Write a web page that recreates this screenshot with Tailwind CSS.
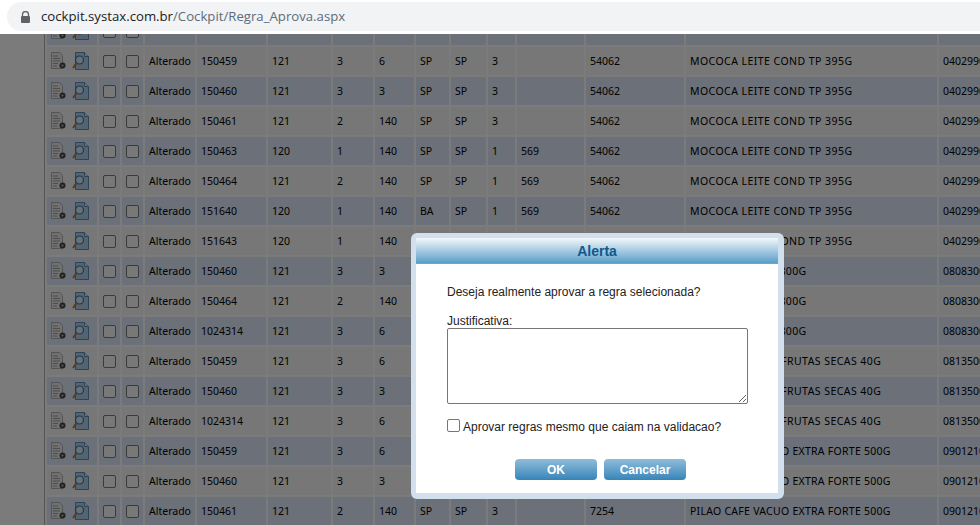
<!DOCTYPE html>
<html lang="en">
  <head>
    <meta charset="UTF-8" />
    <title>Regra Aprova</title>
    <script src="https://cdn.jsdelivr.net/npm/@tailwindcss/browser@4"></script>
  </head>
  <body class="h-[525px] w-[980px] overflow-hidden bg-white font-['Liberation_Sans',sans-serif]">
    <!-- browser bar -->
    <div class="h-[34px] overflow-hidden bg-white pl-[7px] pt-[2px]">
      <div class="flex h-[29px] w-[1100px] items-center rounded-full bg-[#f1f3f4] pl-[13px]">
        <svg width="11" height="12" viewBox="0 0 11 12" class="mr-[10px]">
          <path d="M2.5 5V3.6a3 3 0 0 1 6 0V5" fill="none" stroke="#5f6368" stroke-width="1.3" />
          <rect x="1" y="5" width="9" height="7" rx="1" fill="#5f6368" />
        </svg>
        <span class="pt-px font-['Open_Sans',sans-serif] text-[13.2px] text-[#5f6b7a]"><span class="text-[#202124]">cockpit.systax.com.br</span>/Cockpit/Regra_Aprova.aspx</span>
      </div>
    </div>

    <div class="relative h-[491px] overflow-hidden bg-[#f7f7f7]">
      <!-- grid, scrolled so the first row is cut off -->
      <div class="ml-[44px] w-[1000px] border-l border-[#aaa] -mt-[19px]">
        <table class="table-fixed border-separate border-spacing-[2px] font-['Noto_Sans',sans-serif] text-[10.5px] text-black">
          <colgroup>
            <col class="w-[50px]" /><col class="w-[21px]" /><col class="w-[21px]" /><col class="w-[49px]" />
            <col class="w-[69px]" /><col class="w-[63px]" /><col class="w-[40px]" /><col class="w-[39px]" />
            <col class="w-[33px]" /><col class="w-[35px]" /><col class="w-[27px]" /><col class="w-[67px]" />
            <col class="w-[98px]" /><col class="w-[251px]" /><col class="w-[100px]" />
          </colgroup>
          <tbody id="rows"></tbody>
        </table>
      </div>

      <!-- overlay -->
      <div class="absolute inset-0 bg-black/50"></div>

      <!-- dialog -->
      <div class="absolute left-[411px] top-[199px] h-[266px] w-[373px] rounded-[6px] bg-[#d1e0ec] pt-[5px] pr-[6px] pb-[6px] pl-[5px]">
        <div class="h-full bg-white">
          <div class="h-[26px] border-b border-[#999] bg-gradient-to-b from-[#f2f7fa] to-[#5a9fc9] text-center text-[14px] leading-[26px] font-bold text-[#0f5a8c]">Alerta</div>
          <div class="px-[31px] pt-[21px] text-[12px] text-[#222]">
            <p class="leading-[14px]">Deseja realmente aprovar a regra selecionada?</p>
            <label class="mt-[16px] block leading-[13px]">Justificativa:</label>
            <textarea class="block h-[76px] w-[301px] rounded-[2px] border border-[#767676] bg-white"></textarea>
            <div class="mt-[15px] flex items-start">
              <span class="h-[13px] w-[13px] rounded-[2px] border border-[#767676] bg-white"></span>
              <span class="ml-[3px] leading-[16px]">Aprovar regras mesmo que caiam na validacao?</span>
            </div>
            <div class="mt-[24px] flex justify-center gap-[7px] pl-[7px]">
              <button class="h-[21px] w-[82px] rounded-[4px] bg-gradient-to-b from-[#8fbcdb] to-[#3485b8] text-[12px] font-bold text-white">OK</button>
              <button class="h-[21px] w-[82px] rounded-[4px] bg-gradient-to-b from-[#8fbcdb] to-[#3485b8] text-[12px] font-bold text-white">Cancelar</button>
            </div>
          </div>
        </div>
      </div>
    </div>

    <script>
      // product name, code, letter spacing of the name
      const MOC = ["MOCOCA LEITE COND TP 395G", "0402990", "tracking-[0.45px]"];
      const LEI = ["LEITE EM PO INT 800G", "0808300", "tracking-[0.3px]"];
      const FRU = ["BARRA CEREAL E FRUTAS SECAS 40G", "0813500", "tracking-[0.45px]"];
      const PIL = ["PILAO CAFE VACUO EXTRA FORTE 500G", "0901210", "tracking-[0.27px]"];

      const data = [
        ["", "", "", "", "", "", "", "", "", "", "", ""],
        ["150459", "121", "3", "6", "SP", "SP", "3", "", "54062", ...MOC],
        ["150460", "121", "3", "3", "SP", "SP", "3", "", "54062", ...MOC],
        ["150461", "121", "2", "140", "SP", "SP", "3", "", "54062", ...MOC],
        ["150463", "120", "1", "140", "SP", "SP", "1", "569", "54062", ...MOC],
        ["150464", "121", "2", "140", "SP", "SP", "1", "569", "54062", ...MOC],
        ["151640", "120", "1", "140", "BA", "SP", "1", "569", "54062", ...MOC],
        ["151643", "120", "1", "140", "BA", "SP", "1", "569", "54062", ...MOC],
        ["150460", "121", "3", "3", "SP", "SP", "3", "", "7254", ...LEI],
        ["150464", "121", "2", "140", "SP", "SP", "3", "", "7254", ...LEI],
        ["1024314", "121", "3", "6", "SP", "SP", "3", "", "7254", ...LEI],
        ["150459", "121", "3", "6", "SP", "SP", "3", "", "7254", ...FRU],
        ["150460", "121", "3", "3", "SP", "SP", "3", "", "7254", ...FRU],
        ["1024314", "121", "3", "6", "SP", "SP", "3", "", "7254", ...FRU],
        ["150459", "121", "3", "6", "SP", "SP", "3", "", "7254", ...PIL],
        ["150460", "121", "3", "3", "SP", "SP", "3", "", "7254", ...PIL],
        ["150461", "121", "2", "140", "SP", "SP", "3", "", "7254", ...PIL],
      ];

      const icons = `
        <div class="flex items-center gap-[6px] pl-[4px]">
          <svg width="15" height="18" viewBox="0 0 15 18">
            <path d="M.5 .5h8l3 3v13H.5z" fill="#e2e2e2" stroke="#a8a8a8" />
            <path d="M2 4h5M2 6.500h7M2 9h7M2 11.500h5M2 14h4" stroke="#9a9a9a" />
            <circle cx="11.500" cy="13.500" r="3" fill="#444" />
            <path d="M10.700 12v3l2.200-1.500z" fill="#bbb" />
          </svg>
          <svg width="17" height="18" viewBox="0 0 17 18">
            <path d="M3.500 .5h9l4 4v13h-13z" fill="#a9c8e0" stroke="#5b88ae" />
            <path d="M12.500 .5v4h4" fill="#d5e6f2" stroke="#5b88ae" />
            <circle cx="7.500" cy="8" r="4" fill="#cfe3f1" stroke="#3f6f99" stroke-width="1.200" />
            <path d="M4.500 11.200L1 16" stroke="#b0783e" stroke-width="2" />
          </svg>
        </div>`;

      const box = `<span class="mx-auto block h-[13px] w-[13px] rounded-[2px] border border-[#767676] bg-[#f0f0f0]"></span>`;

      document.getElementById("rows").innerHTML = data
        .map((row, i) => {
          const bg = i % 2 === 0 ? "bg-[#d9e1f2]" : "bg-[#eeeeee]";
          const spread = row[11];
          const cells = row
            .slice(0, 11)
            .map((v, c) => `<td class="${bg} ${c === 9 ? spread : ""} overflow-hidden px-[4px] pt-px whitespace-nowrap">${v}</td>`)
            .join("");
          return `<tr class="h-[28px]">
            <td class="${bg} p-0">${icons}</td>
            <td class="${bg} p-0">${box}</td>
            <td class="${bg} p-0">${box}</td>
            <td class="${bg} px-[4px] pt-px whitespace-nowrap">${i === 0 ? "" : "Alterado"}</td>
            ${cells}
          </tr>`;
        })
        .join("");
    </script>
  </body>
</html>
